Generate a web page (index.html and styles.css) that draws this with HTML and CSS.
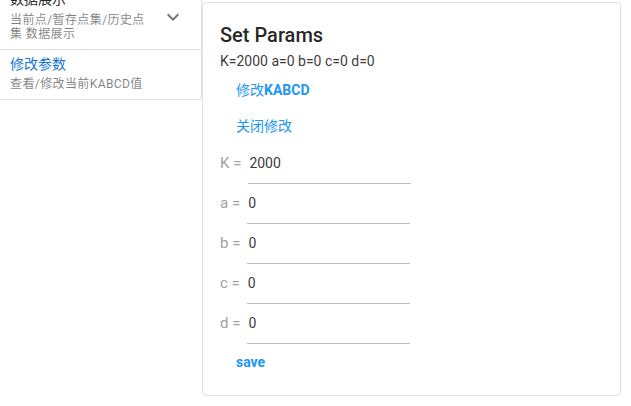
FILE: index.html
```html
<!DOCTYPE html>
<html lang="zh">
<head>
<meta charset="utf-8">
<title>Set Params</title>
<link rel="stylesheet" href="styles.css">
</head>
<body>
<div class="layout">
  <aside class="side">
    <div class="item">
      <div class="item-text">
        <div class="item-title">数据展示</div>
        <div class="item-sub">当前点/暂存点集/历史点集 数据展示</div>
      </div>
      <svg class="chev" viewBox="0 0 24 24" width="24" height="24"><path d="M7.41 8.58L12 13.17l4.59-4.59L18 10l-6 6-6-6 1.41-1.42z"/></svg>
    </div>
    <div class="item item-active">
      <div class="item-text">
        <div class="item-title blue">修改参数</div>
        <div class="item-sub">查看/修改当前KABCD值</div>
      </div>
    </div>
  </aside>
  <main class="card">
    <h1 class="title">Set Params</h1>
    <div class="summary">K=2000 a=0 b=0 c=0 d=0</div>
    <div class="btns">
      <button class="tbtn bold"><span class="cjk">修改</span>KABCD</button>
      <button class="tbtn">关闭修改</button>
    </div>
    <div class="fields">
      <div class="field"><span class="lbl">K =</span><input class="inp" value="2000"></div>
      <div class="field"><span class="lbl">a =</span><input class="inp" value="0"></div>
      <div class="field"><span class="lbl">b =</span><input class="inp" value="0"></div>
      <div class="field"><span class="lbl">c =</span><input class="inp" value="0"></div>
      <div class="field"><span class="lbl">d =</span><input class="inp" value="0"></div>
    </div>
    <button class="tbtn bold">save</button>
  </main>
</div>
</body>
</html>
```
FILE: styles.css
```css
html, body {
  margin: 0;
  padding: 0;
  background: #fff;
  font-family: Roboto, "Noto Sans CJK SC", sans-serif;
  color: rgba(0,0,0,.87);
  overflow: hidden;
}
.layout {
  display: flex;
  align-items: flex-start;
}
.side {
  width: 201px;
  margin-top: -21px;
  border-right: 1px solid #e0e0e0;
  border-bottom: 1px solid #e0e0e0;
  border-bottom-right-radius: 4px;
  flex: none;
}
.item {
  display: flex;
  align-items: flex-start;
  padding: 10px 10px 9px;
}
.item + .item {
  border-top: 1px solid #e0e0e0;
  padding: 4px 10px 7px;
}
.item-text {
  width: 140px;
}
.item-title {
  font-size: 14px;
  line-height: 20px;
  color: rgba(0,0,0,.87);
}
.item:first-child .item-sub {
  margin-top: 4px;
}
.item:first-child {
  padding-bottom: 8px;
}
.item-sub {
  font-size: 12px;
  line-height: 14px;
  letter-spacing: 0.4px;
  color: rgba(0,0,0,.5);
}
.item-active .item-title {
  margin-bottom: 2px;
}
.item-active .item-sub {
  line-height: 16px;
}
.blue {
  color: #1976d2;
}
.chev {
  fill: rgba(0,0,0,.54);
  margin-left: 11px;
  margin-top: 16px;
}
.card {
  margin-top: 2px;
  box-sizing: border-box;
  height: 394px;
  width: 419px;
  border: 1px solid #e0e0e0;
  border-radius: 4px;
  padding: 16px 0 0 17px;
}
.title {
  margin: 0;
  font-size: 20px;
  font-weight: 500;
  line-height: 32px;
}
.summary {
  font-size: 14px;
  line-height: 20px;
  color: rgba(0,0,0,.8);
}
.btns {
  display: flex;
  flex-direction: column;
  align-items: flex-start;
  padding-bottom: 1px;
}
.tbtn {
  display: block;
  height: 36px;
  padding: 0 16px;
  border: none;
  background: none;
  font-family: Roboto, "Noto Sans CJK SC", sans-serif;
  font-size: 14px;
  color: #2196f3;
  cursor: pointer;
}
.bold {
  font-weight: 700;
}
.cjk {
  font-weight: 400;
}
.field {
  display: flex;
  align-items: flex-start;
  height: 40px;
}
.lbl {
  font-size: 15px;
  line-height: 38px;
  color: #a0a0a0;
  margin-right: 7px;
  white-space: pre;
}
.inp {
  width: 163px;
  height: 40px;
  box-sizing: border-box;
  border: none;
  border-bottom: 1px solid #bdbdbd;
  padding: 0 1px 1px;
  font-family: Roboto, sans-serif;
  font-size: 14px;
  color: rgba(0,0,0,.8);
  outline: none;
  background: none;
}
```
